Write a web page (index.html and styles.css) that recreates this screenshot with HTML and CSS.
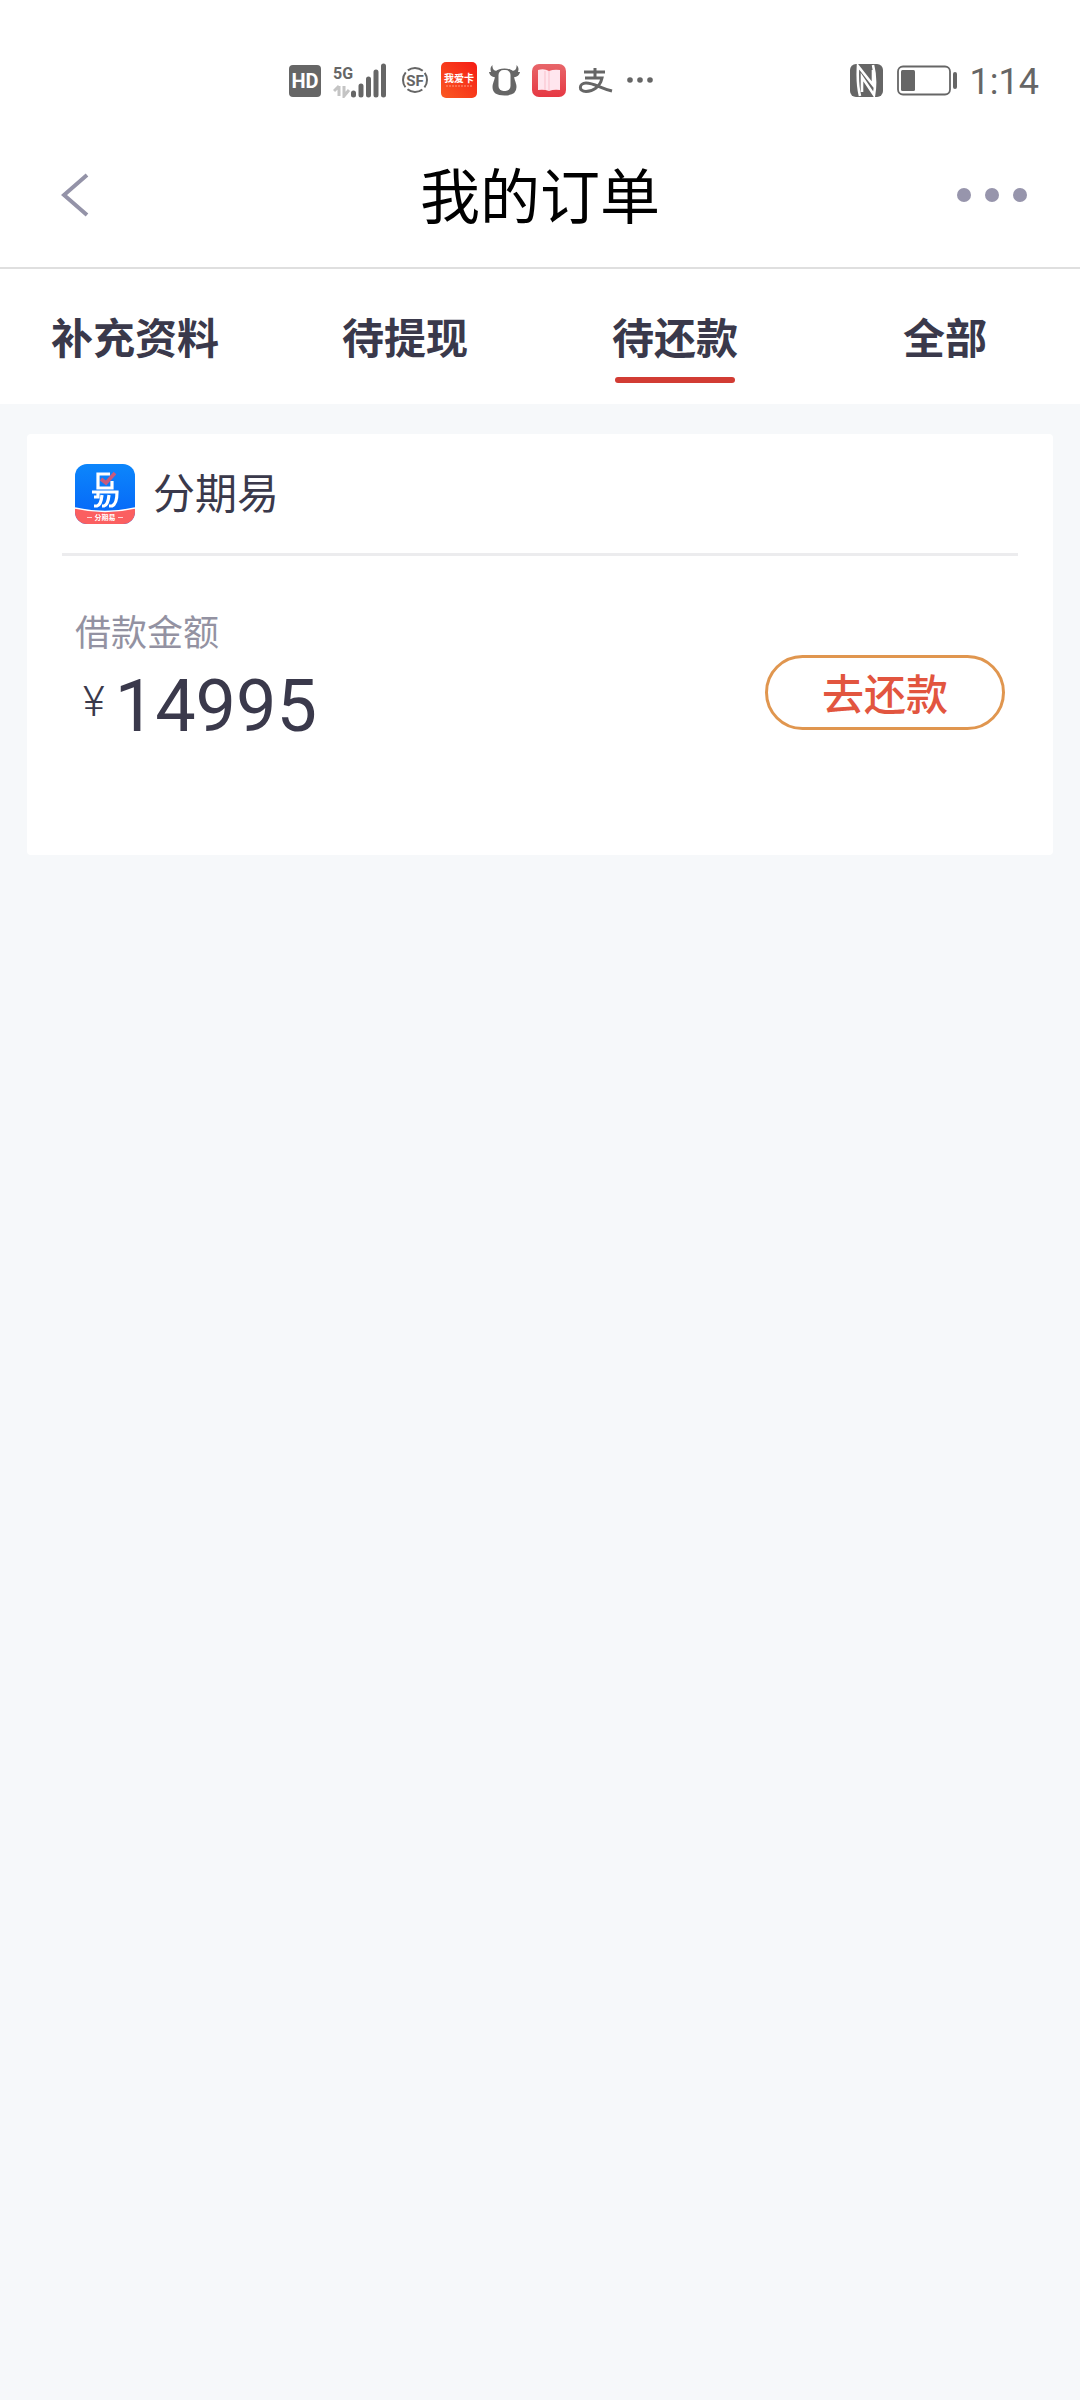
FILE: index.html
```html
<!DOCTYPE html>
<html lang="zh-CN">
<head>
<meta charset="utf-8">
<meta name="viewport" content="width=device-width, initial-scale=1">
<title>我的订单</title>
<link rel="stylesheet" href="styles.css">
</head>
<body>
<div class="status">
  <div class="status-apps">
    <svg width="32" height="36" viewBox="0 0 32 36"><rect y="3" width="32" height="32" rx="4" fill="#666"/><text class="svg-bold" x="16" y="26" font-size="20" text-anchor="middle" fill="#fff">HD</text></svg>
    <svg width="56" height="36" viewBox="0 0 56 36"><text class="svg-bold" x="0" y="17" font-size="16" fill="#666">5G</text><path d="M6 24v10M1 29l5-5M11 24v10l5-6" fill="none" stroke="#c4c4c4" stroke-width="3"/><path d="M20.500 31v2M28 24v9M35.500 17v16M43 10v23M50.500 4v29" stroke="#666" stroke-width="5" stroke-linecap="round"/></svg>
    <svg width="28" height="36" viewBox="0 0 28 36"><circle cx="14" cy="18" r="12" fill="none" stroke="#666" stroke-width="2" stroke-dasharray="16 2.850" stroke-dashoffset="8"/><text class="svg-bold" x="14" y="24" font-size="15" text-anchor="middle" fill="#666">SF</text></svg>
    <svg width="36" height="36" viewBox="0 0 36 36"><defs><linearGradient id="card" x1="1" y1="0" x2="0" y2="1"><stop stop-color="#f51b14"/><stop offset="1" stop-color="#fa5a22"/></linearGradient></defs><rect width="36" height="36" rx="5" fill="url(#card)"/><text class="svg-cjk" x="18" y="20" font-size="10" text-anchor="middle" fill="#fff">我爱卡</text><path d="M5 24h26" stroke="#ff9a80" stroke-dasharray="2 1"/></svg>
    <svg width="31" height="36" viewBox="0 0 31 36"><path d="M3.500 3C3 7 5 9 9 9v5l-3 1C3 15 .5 13 0 10h2c-1-3-.5-5 1.500-7ZM27.500 3c.5 4-1.500 6-5.500 6v5l3 1c3 0 5.500-2 6-5h-2c1-3 .5-5-1.500-7Z" fill="#666"/><path d="M10 9C6 10 8 13 7 17s-2 5-2 8c0 5 4 7 10.500 7S26 30 26 25c0-3-1-4-2-8s1-7-3-8q-5.500-2-11 0Z" fill="#666" stroke="#666" stroke-width="3"/><rect x="9.500" y="8" width="12" height="21" rx="5" fill="#fff"/></svg>
    <svg width="34" height="36" viewBox="0 0 34 36"><defs><linearGradient id="book" x1="0" y1="0" x2="0" y2="1"><stop stop-color="#e8666a"/><stop offset="1" stop-color="#e63843"/></linearGradient></defs><rect y="2" width="34" height="33" rx="7" fill="url(#book)"/><path d="M6 8q6-2 11 1 5-2 11-1v20q-6-1-11 1-5-2-11-1Z" fill="#ffe6ee"/><path d="M17 9v20M13 9v19" stroke="#f9bfcb"/></svg>
    <svg width="36" height="36" viewBox="0 0 36 36"><path d="M6 10h21M17 6v10M7 16h17C22 25 15 29.500 8 29.500c-8 0-7-8.500 0-8.500 8 0 14 5 26 8" fill="none" stroke="#666" stroke-width="3"/></svg>
    <svg width="28" height="36" viewBox="0 0 28 36"><g fill="#666"><circle cx="4" cy="18" r="2.800"/><circle cx="14" cy="18" r="2.800"/><circle cx="24" cy="18" r="2.800"/></g></svg>
  </div>
  <div class="status-system">
    <svg width="34" height="36" viewBox="0 0 34 36"><rect y="2" width="33" height="33" rx="6" fill="#666"/><path d="M10 34C7.500 24 7.500 13 8 4l15 19V8M23 3c2.500 10 2.500 21 1 30L12 15v15" fill="none" stroke="#fff" stroke-width="2.600"/></svg>
    <svg width="62" height="36" viewBox="0 0 62 36"><rect x="2" y="4.500" width="52" height="28" rx="5" fill="none" stroke="#666" stroke-width="1.800"/><rect x="5" y="8" width="14" height="21" rx="1.500" fill="#666"/><path d="M59 12v13" stroke="#666" stroke-width="4" stroke-linecap="round"/></svg>
    <time class="clock">1:14</time>
  </div>
</div>

<header class="bar">
  <button class="icon-btn" aria-label="返回"><svg width="28" height="44" viewBox="0 0 28 44"><path d="M26 2 3 22l23 20" fill="none" stroke="#9493a8" stroke-width="4"/></svg></button>
  <h1 class="title">我的订单</h1>
  <button class="icon-btn icon-btn-end" aria-label="更多"><svg width="70" height="14" viewBox="0 0 70 14"><g fill="#9795ac"><circle cx="7" cy="7" r="7"/><circle cx="35" cy="7" r="7"/><circle cx="63" cy="7" r="7"/></g></svg></button>
</header>

<nav class="tabs">
  <a class="tab" href="#info">补充资料</a>
  <a class="tab" href="#withdraw">待提现</a>
  <a class="tab tab-active" href="#repay" aria-current="page">待还款</a>
  <a class="tab" href="#all">全部</a>
</nav>

<main class="orders">
  <article class="card">
    <div class="card-head">
      <svg width="60" height="60" viewBox="0 0 60 60"><defs><linearGradient id="blue" x1="0" y1="0" x2="0" y2="1"><stop stop-color="#0c86fb"/><stop offset="1" stop-color="#0563f8"/></linearGradient><clipPath id="tile"><rect width="60" height="60" rx="12"/></clipPath></defs><g clip-path="url(#tile)"><rect width="60" height="60" fill="url(#blue)"/><path d="M0 44q30 7 60 0v16H0Z" fill="#fb5f60"/><path d="M0 44q30 7 60 0" fill="none" stroke="#fff" stroke-width="1.500"/></g><path d="M35 10H23v14h14v-7M17 28h25q0 12-5 14h-3M23 28v5h-4M34 31q-1 10-5 11h-2M27 31q-1 10-5 11h-3" fill="none" stroke="#fff" stroke-width="3.200"/><path d="m26 15 5 4 9-10" fill="none" stroke="#c75a7d" stroke-width="3.600"/><text class="svg-cjk" x="30" y="56" font-size="7" text-anchor="middle" fill="#fff">分期易</text><path d="M12 53.500h5M43 53.500h5" stroke="#ffd0d0"/></svg>
      <h2 class="product">分期易</h2>
    </div>
    <div class="card-body">
      <div class="sum">
        <p class="label">借款金额</p>
        <p class="amount"><span class="yen">¥</span><span class="digits">14995</span></p>
      </div>
      <button class="repay">去还款</button>
    </div>
  </article>
</main>
</body>
</html>
```
FILE: styles.css
```css
* { box-sizing: border-box; }

body {
  margin: 0;
  min-height: 100vh;
  background: #f6f8fa;
  color: #3a394b;
  font-family: Roboto, "Noto Sans CJK SC", sans-serif;
}

h1, h2, p { margin: 0; font-weight: 400; }
svg { display: block; flex: none; }
button { padding: 0; border: 0; background: none; font: inherit; }

.svg-bold { font-family: Roboto, sans-serif; font-weight: 700; }
.svg-cjk { font-family: "Noto Sans CJK SC", sans-serif; font-weight: 700; }

.status {
  display: flex;
  justify-content: space-between;
  padding: 60px 41px 27px 289px;
  background: #fff;
}
.status-apps, .status-system { display: flex; align-items: center; gap: 12px; }
.clock { color: #666; font-size: 36px; line-height: 36px; padding-top: 4px; }

.bar {
  display: grid;
  grid-template-columns: 1fr auto 1fr;
  align-items: center;
  height: 142px;
  padding: 0 53px 4px;
  border-bottom: 2px solid #dfdfdf;
  background: #fff;
}
.icon-btn { justify-self: start; padding-left: 8px; }
.icon-btn-end { justify-self: end; padding-left: 0; }
.title { padding-top: 8px; color: #000; font-size: 60px; line-height: 80px; }

.tabs { display: flex; height: 135px; background: #fff; }
.tab {
  display: flex;
  flex: 1;
  flex-direction: column;
  align-items: center;
  gap: 7px;
  padding-top: 41px;
  color: #3a394b;
  font-size: 42px;
  font-weight: 700;
  line-height: 60px;
  text-decoration: none;
}
.tab-active::after {
  width: 120px;
  height: 6px;
  border-radius: 3px;
  background: #d23c34;
  content: "";
}

.orders { padding: 30px 27px; }
.card {
  padding: 0 35px 76px;
  border-radius: 4px;
  background: #fff;
}
.card-head {
  display: flex;
  align-items: center;
  gap: 18px;
  padding: 30px 13px 29px;
  border-bottom: 3px solid #ececee;
}
.product { padding-top: 2px; font-size: 42px; line-height: 58px; }
.card-body {
  display: flex;
  align-items: center;
  justify-content: space-between;
  padding: 54px 13px 0;
}
.sum { padding-bottom: 36px; }
.label { margin-bottom: 13px; color: #9392a2; font-size: 36px; line-height: 48px; }
.amount { display: flex; gap: 10px; padding-left: 8px; }
.yen { font-size: 42px; font-weight: 300; line-height: 62px; }
.digits { font-size: 72px; line-height: 72px; }
.repay {
  width: 240px;
  height: 75px;
  margin-bottom: 4px;
  padding-top: 6px;
  border: 3px solid #e0964f;
  border-radius: 38px;
  color: #e2553f;
  font-size: 42px;
  font-weight: 500;
  line-height: 60px;
}
```
